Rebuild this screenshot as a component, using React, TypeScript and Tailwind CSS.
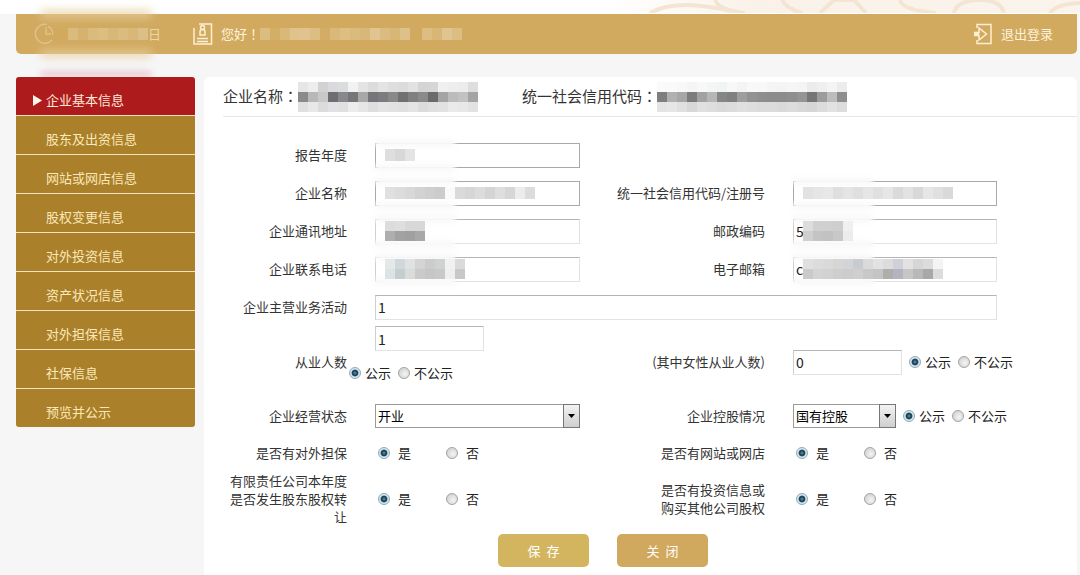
import type { ReactNode } from "react";

const menuItems = [
  "企业基本信息",
  "股东及出资信息",
  "网站或网店信息",
  "股权变更信息",
  "对外投资信息",
  "资产状况信息",
  "对外担保信息",
  "社保信息",
  "预览并公示",
];

// masked values: each row is a list of 10px wide blocks
const masks = {
  year: ["#dedede #d8d8d8 #e4e4e4"],
  company: [
    "#e0e0e0 #dcdcdc #d8d8d8 #d2d2d2 #cfcfcf #cccccc #fafafa #dadada #d6d6d6 #dcdcdc #d4d4d4 #dedede #d6d6d6 #ececec #dcdcdc",
  ],
  address: ["#dcdcdc #dedede #d8d8d8 #d8d8d8", "#aeaeae #a2a2a2 #a0a0a0 #a8a8a8"],
  phone: [
    "#e4e8e8 #d0d8da #e0e2e2 #d4d4d4 #cccccc #cfd2d2 #f0f2f2 #dadada",
    "#dde2e2 #c4ced0 #dadcdc #cacaca #c6c6c6 #c8caca #eef0f0 #c8c8c8",
  ],
  code: [
    "#e2e2e2 #e6e6e6 #e8e8e8 #dfdfdf #e4e4e4 #dfdfdf #e6e6e6 #e0e0e0 #e6e6e6 #dadada #e2e2e2 #d8d8d8 #e6e6e6 #e0e0e0 #d9d9d9",
  ],
  postcode: ["#dddddd #d0d0d0 #d0d0d0 #cecece #f0f0f0", "#cfcfcf #c4c4c4 #c2c2c2 #c8c8c8 #ececec"],
  email: [
    "#e0e0e0 #dcdcdc #dadada #d6d6d6 #d2d4d8 #c8ccd2 #dadada #e2e2e2 #dcdcdc #cfd0dc #e2e2e2 #d6d6d6 #dcdcdc #f4f4f4",
    "#cacaca #d4d4d4 #d2d2d2 #cecece #cccccc #cfcfcf #c8c8c8 #c4c4c4 #b0aeac #b2b4c0 #c6c6c6 #b8b8b8 #a8a8a8 #dcdcdc",
  ],
  titleName: [
    "#e6e6e6 #ededed #d2d2d2 #d8dade #dadcde #f2f2f2 #e4e4e4 #dcdcdc #e4e4e4 #dedede #dcdcdc #e2e2e2 #d4d4d4 #d6d6d6 #f0f0f0 #eeeeee #ececec #dedede",
    "#8a8a8a #b8b8b8 #c8c8c8 #6e6e70 #88888c #75757a #a8a8a8 #76767a #7c7c7c #88888a #707072 #808080 #8a8a8c #6a6a6c #a4a4a4 #bcbcbc #c2c2c2 #a4a4a4",
    "#e0e0e0 #e8e8e8 #dcdcdc #e2e2e4 #e0e0e0 #ececec #e6e6e6 #dedede #e4e4e4 #e2e2e2 #e0e0e0 #e4e4e4 #dcdcdc #e0e0e0 #e2e2e2 #eaeaea #e8e8e8 #e2e2e2",
  ],
  titleCode: [
    "#fafafa #fafafa #f8f8f8 #f4f6f5 #f8f8f8 #f4f5f5 #f0f4f3 #f8f8f8 #f4f4f4 #f8f8f8 #f8f8f8 #f6f4f4 #f4f4f4 #f6f6f6 #f4f4f4 #ececec #efefef #f4f4f4 #ececec",
    "#7e7e7e #b0b0b0 #a6a6a6 #7c7c7c #a2a2a2 #b6b6b6 #868686 #808080 #9e9e9e #929292 #8e8e8e #8c8c8c #8c8c8c #8e8e8e #949494 #767676 #9c9c9c #bcbcbc #8e8e8e",
    "#e4e4e4 #e6e6e6 #e0e0e0 #d8d8d8 #e0e0e0 #dedede #dadada #dcdcdc #e0e0e0 #dedede #dcdcdc #dcdcdc #dadada #dcdcdc #d8d8d8 #d6d6d6 #dcdcdc #e2e2e2 #dcdcdc",
  ],
  date: ["#dabb7c #d6b270 #dabb7e #dcbd82 #d8b778 #dabc80 #d8b778 #dcbf86"],
  user: [
    "#dcbd80 #d3ae66 #d9b878 #dfc28c #e0c490 #dcbd82 #d3ad66 #d9b878 #ddbf84 #dabb7e #d8b778 #e0c590 #dbbc80 #d8b676 #dec188",
  ],
  userRole: ["#dcbe84 #d8b676 #e0c590 #dcbd82"],
};

function Mosaic({ rows, tall }: { rows: string[]; tall?: boolean }) {
  return (
    <span aria-hidden="true" className="flex flex-col">
      {rows.map((row, i) => (
        <span key={i} className="flex">
          {row.split(" ").map((color, j) => (
            <span
              key={j}
              className={tall ? "h-3 w-[10px]" : "h-[10px] w-[10px]"}
              style={{ backgroundColor: color }}
            />
          ))}
        </span>
      ))}
    </span>
  );
}

// full width punctuation centred in its cell
function Mark({ children }: { children: ReactNode }) {
  return <span className="font-['Noto_Sans_CJK_TC',sans-serif]">{children}</span>;
}

function Label({ htmlFor, children }: { htmlFor?: string; children: ReactNode }) {
  return (
    <label htmlFor={htmlFor} className="text-right leading-[18px] text-[#333]">
      {children}
    </label>
  );
}

function TextField({
  id,
  value,
  mask,
  strong,
}: {
  id: string;
  value?: string;
  mask?: string[];
  strong?: boolean;
}) {
  return (
    <div className="relative h-[25px] w-full">
      <input
        id={id}
        type="text"
        defaultValue={value}
        className={
          strong
            ? "block h-full w-full border border-[#a9a9a9] bg-white px-0.5 text-sm text-[#999] outline-none"
            : "block h-full w-full border border-[#e2e2e2] border-t-[#b5b5b5] border-l-[#cfcfcf] bg-white px-0.5 text-sm text-[#222] outline-none"
        }
      />
      {mask && (
        <>
          <span className="pointer-events-none absolute -top-1 left-0 h-2 w-20 bg-[#f9f9f9] blur-[2px]" />
          <span className="pointer-events-none absolute -bottom-1 left-0 h-2 w-20 bg-[#f9f9f9] blur-[2px]" />
          <span className="pointer-events-none absolute inset-y-0 left-2.5 flex items-center">
            <Mosaic rows={mask} tall={mask.length === 1} />
          </span>
        </>
      )}
    </div>
  );
}

function Radio({
  name,
  label,
  checked,
  wide,
}: {
  name: string;
  label: string;
  checked?: boolean;
  wide?: boolean;
}) {
  return (
    <label className={wide ? "flex items-center gap-2" : "flex items-center gap-1"}>
      <input
        type="radio"
        name={name}
        defaultChecked={checked}
        className="h-3 w-3 shrink-0 appearance-none rounded-full border border-[#a3a3a3] bg-[radial-gradient(circle_at_60%_60%,#f4f4f4,#c9c9c9)] checked:border-[#8eabb9] checked:bg-[radial-gradient(circle,#5d9ab8_0,#1d4358_30%,#1d4358_40%,#d5e6ee_55%)]"
      />
      {label}
    </label>
  );
}

function PublicRadios({ name }: { name: string }) {
  return (
    <div className="flex items-center gap-[7px] whitespace-nowrap">
      <Radio name={name} label="公示" checked />
      <Radio name={name} label="不公示" />
    </div>
  );
}

function YesNo({ name }: { name: string }) {
  return (
    <div className="flex items-center gap-[35px] pl-[3px]">
      <Radio name={name} label="是" checked wide />
      <Radio name={name} label="否" wide />
    </div>
  );
}

function Select({ id, value }: { id: string; value: string }) {
  return (
    <div className="relative h-6 w-full">
      <select
        id={id}
        defaultValue={value}
        className="block h-full w-full appearance-none border border-[#9b9b9b] bg-white px-0.5 text-[13px] text-black outline-none"
      >
        <option>{value}</option>
      </select>
      <span className="pointer-events-none absolute inset-y-0 right-0 flex w-[17px] items-center justify-center border border-[#777] bg-linear-to-b from-[#f3f3f3] to-[#cfcfcf]">
        <svg width="7" height="4" viewBox="0 0 7 4" fill="#000">
          <path d="M0 0h7L3.500 4z" />
        </svg>
      </span>
    </div>
  );
}

function TopBar() {
  return (
    <header className="relative flex h-10 items-center rounded-b-[5px] bg-[#d1aa60] pr-6 pl-[18px] text-[13px] text-[#fdf3dc]">
      {/* soft glow around the date */}
      <span className="pointer-events-none absolute -top-1 left-6 h-2 w-28 rounded-full bg-[#e6cf9f] opacity-80 blur-[4px]" />
      <span className="pointer-events-none absolute -bottom-1 left-6 h-2 w-28 rounded-full bg-[#e6cf9f] opacity-80 blur-[4px]" />
      <svg width="22" height="22" viewBox="0 0 22 22" fill="none" stroke="#dfc18a" strokeWidth="1.500">
        <path d="M13 1.500A9.500 9.500 0 1 0 18 17" />
        <path d="M12 4v7h5M14 3.500a7 7 0 0 1 4.500 8" />
      </svg>
      <span className="ml-3 flex items-center">
        <Mosaic rows={masks.date} tall />
        <span className="text-[#ecd6a8]">日</span>
      </span>
      <svg className="ml-8 shrink-0" width="20" height="22" viewBox="0 0 20 22" fill="none" stroke="#fdf0d2" strokeWidth="1.500">
        <path d="M6 1h12.500v20H1V5M4 15.500h11M4 18.500h11" />
        <circle cx="9.500" cy="4.500" r="2" />
        <path d="M7 12V9c0-1.500 1-2.500 2.500-2.500S12 7.500 12 9v3z" />
      </svg>
      <span className="ml-2 flex items-center whitespace-nowrap">
        您好<Mark>！</Mark>
        <Mosaic rows={masks.user} tall />
        <span className="ml-3">
          <Mosaic rows={masks.userRole} tall />
        </span>
      </span>
      <a href="#logout" className="ml-auto flex items-center gap-2">
        <svg width="20" height="22" viewBox="0 0 20 22" fill="none" stroke="#fdf0d2" strokeWidth="1.500">
          <path d="M4 5V1.500h14v19H4V17" />
          <path d="M1 9.500h5V5l7.500 6L6 17v-4.500H1M1 11h5" />
        </svg>
        退出登录
      </a>
    </header>
  );
}

function Sidebar() {
  return (
    <nav className="relative w-[179px] shrink-0 self-start text-[13px]">
      <span className="pointer-events-none absolute -top-1.5 left-6 h-1.5 w-28 rounded-full bg-[#e3a9b3] opacity-60 blur-[3px]" />
      <div className="relative flex flex-col gap-px overflow-hidden rounded-[3px] bg-[#f3e2bb]">
        {menuItems.map((item, i) => (
          <a
            key={item}
            href={`#step-${i + 1}`}
            className={
              i === 0
                ? "flex h-[38px] items-center bg-[#ae1b1d] pt-2 text-[#fde9d8]"
                : "flex h-[38px] items-center bg-[#aa802b] pt-2 text-[#fbe8b8]"
            }
          >
            <span className="flex w-[30px] justify-end pr-1">
              {i === 0 && (
                <svg width="9" height="11" viewBox="0 0 9 11" fill="#fff6ea">
                  <path d="M0 0l9 5.500L0 11z" />
                </svg>
              )}
            </span>
            {item}
          </a>
        ))}
      </div>
    </nav>
  );
}

export default function App() {
  return (
    <div className="min-h-screen bg-[#f6f6f7] font-['Noto_Sans_CJK_SC',sans-serif]">
      <div className="flex h-3.5 justify-end bg-white">
        <svg className="h-[13px] w-[470px]" viewBox="0 0 470 13" preserveAspectRatio="none">
          <defs>
            <linearGradient id="fade">
              <stop offset="0" stopColor="#fbf3ea" stopOpacity="0" />
              <stop offset="0.300" stopColor="#faf2e9" />
              <stop offset="1" stopColor="#fbf4ec" />
            </linearGradient>
          </defs>
          <path d="M0 0h470v13H0z" fill="url(#fade)" />
          <path
            d="M40 13Q60 2 92 6t30 7M105 0q4 10 30 13M172 0q4 8 20 13M210 13l14-13h20l12 13M290 0q2 10 36 13M344 13q2-12 24-13t26 13M440 13q6-9 30-10"
            fill="none"
            stroke="#f4e4d4"
            strokeWidth="4"
          />
        </svg>
      </div>

      <div className="pr-[3px] pl-4">
        <TopBar />

        <div className="mt-[23px] flex gap-[9px]">
          <Sidebar />

          <main className="min-w-0 grow rounded-t-md bg-white pb-2">
            <div className="ml-[19px] flex h-10 items-center border-b border-[#e6e6e6] text-[15px] whitespace-nowrap text-[#333]">
              <h1 className="flex items-center">
                企业名称<Mark>：</Mark>
                <Mosaic rows={masks.titleName} />
              </h1>
              <p className="ml-11 flex items-center">
                统一社会信用代码<Mark>：</Mark>
                <Mosaic rows={masks.titleCode} />
              </p>
            </div>

            <form className="pt-[19px] text-[13px] text-[#222]">
              <div className="grid grid-cols-[143px_205px_157px_minmax(0,1fr)] grid-rows-[repeat(5,38px)_72px_36px_38px_54px] items-center gap-x-7 pr-20">
                <Label htmlFor="year">报告年度</Label>
                <TextField id="year" mask={masks.year} strong />
                <span className="col-span-2" />

                <Label htmlFor="company">企业名称</Label>
                <TextField id="company" mask={masks.company} strong />
                <Label htmlFor="code">统一社会信用代码/注册号</Label>
                <TextField id="code" mask={masks.code} strong />

                <Label htmlFor="address">企业通讯地址</Label>
                <TextField id="address" mask={masks.address} />
                <Label htmlFor="postcode">邮政编码</Label>
                <TextField id="postcode" value="5" mask={masks.postcode} />

                <Label htmlFor="phone">企业联系电话</Label>
                <TextField id="phone" mask={masks.phone} />
                <Label htmlFor="email">电子邮箱</Label>
                <TextField id="email" value="c" mask={masks.email} />

                <Label htmlFor="business">企业主营业务活动</Label>
                <div className="col-span-3">
                  <TextField id="business" value="1" />
                </div>

                <Label htmlFor="staff">从业人数</Label>
                <div className="flex flex-col gap-3 self-start">
                  <div className="w-[109px]">
                    <TextField id="staff" value="1" />
                  </div>
                  <div className="-ml-[26px]">
                    <PublicRadios name="staffPublic" />
                  </div>
                </div>
                <Label htmlFor="female">(其中女性从业人数)</Label>
                <div className="flex items-center gap-[7px]">
                  <div className="w-[109px] shrink-0">
                    <TextField id="female" value="0" />
                  </div>
                  <PublicRadios name="femalePublic" />
                </div>

                <Label htmlFor="status">企业经营状态</Label>
                <Select id="status" value="开业" />
                <Label htmlFor="holding">企业控股情况</Label>
                <div className="flex items-center gap-[7px]">
                  <div className="w-[103px] shrink-0">
                    <Select id="holding" value="国有控股" />
                  </div>
                  <PublicRadios name="holdingPublic" />
                </div>

                <Label>是否有对外担保</Label>
                <YesNo name="guarantee" />
                <Label>是否有网站或网店</Label>
                <YesNo name="website" />

                <div className="pl-5">
                  <p className="text-right leading-[18px] text-[#333]">
                    有限责任公司本年度是否发生股东股权转让
                  </p>
                </div>
                <YesNo name="transfer" />
                <p className="text-right leading-[18px] text-[#333]">
                  是否有投资信息或
                  <br />
                  购买其他公司股权
                </p>
                <YesNo name="invest" />
              </div>

              <div className="mt-2 flex justify-center gap-7 pr-[75px]">
                <button
                  type="button"
                  className="h-[33px] w-[91px] rounded-[5px] bg-[#d4b55f] text-white"
                >
                  保&nbsp;&nbsp;存
                </button>
                <button
                  type="button"
                  className="h-[33px] w-[91px] rounded-[5px] bg-[#d1a95e] text-white"
                >
                  关&nbsp;&nbsp;闭
                </button>
              </div>
            </form>
          </main>
        </div>
      </div>
    </div>
  );
}
